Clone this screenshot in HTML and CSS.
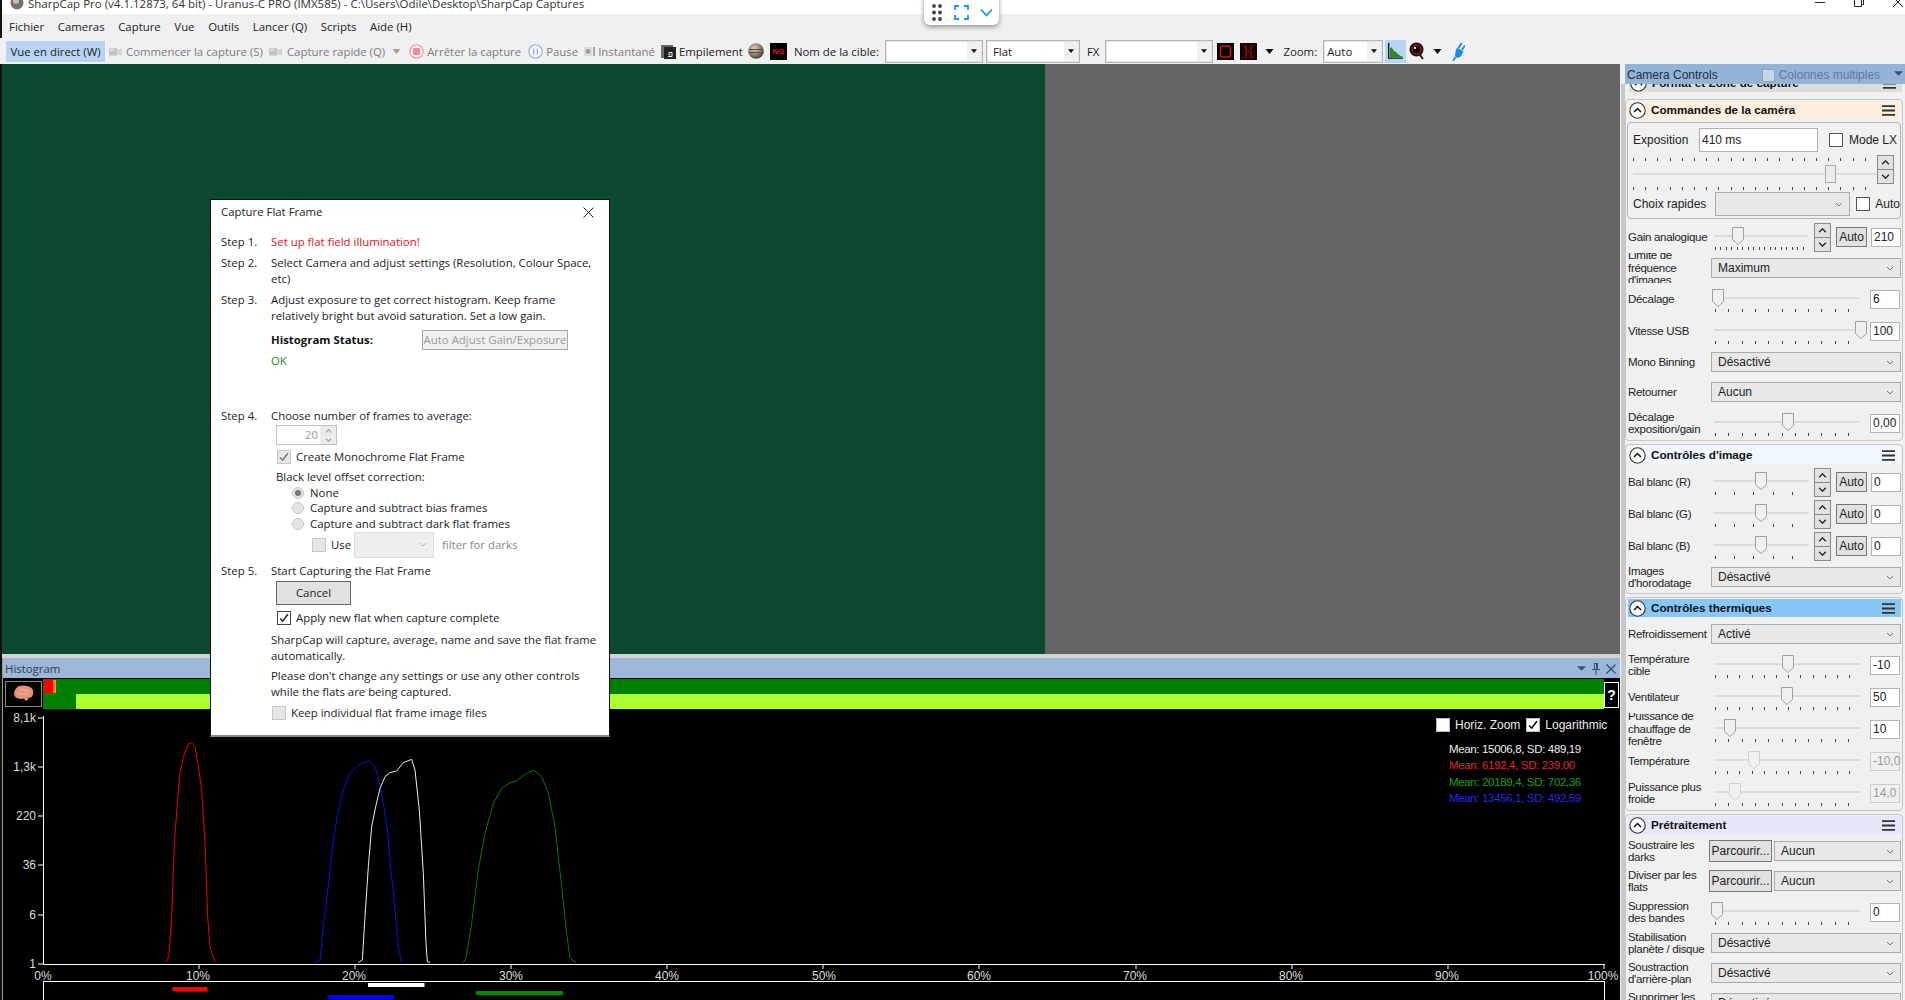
FILE: index.html
```html
<!DOCTYPE html>
<html lang="fr">
<head>
<meta charset="utf-8">
<title>SharpCap Pro</title>
<link rel="stylesheet" href="styles.css">
</head>
<body>
<svg class="defs" aria-hidden="true">
  <symbol id="chev" viewBox="0 0 8 5"><path d="M1 1l3 3 3-3" fill="none" stroke="#777"/></symbol>
  <symbol id="thumb" viewBox="0 0 12 18"><path d="M.5.5h11v12l-5.5 5-5.5-5z" fill="#f0f0f0" stroke="#a0a0a0"/></symbol>
  <symbol id="thumbd" viewBox="0 0 12 18"><path d="M.5.5h11v12l-5.5 5-5.5-5z" fill="#f0f0f0" stroke="#d0d0d0"/></symbol>
  <symbol id="up" viewBox="0 0 10 6"><path d="M1 5l4-4 4 4" fill="none" stroke="#222" stroke-width="1.6"/></symbol>
  <symbol id="down" viewBox="0 0 10 6"><path d="M1 1l4 4 4-4" fill="none" stroke="#222" stroke-width="1.6"/></symbol>
  <symbol id="collapse" viewBox="0 0 17 17"><circle cx="8.5" cy="8.5" r="7.7" fill="#fff" stroke="#333" stroke-width="1.1"/><path d="M5 10l3.5-3.5L12 10" fill="none" stroke="#111" stroke-width="1.5"/></symbol>
  <symbol id="burger" viewBox="0 0 13 11"><path d="M0 1.2h13M0 5.5h13M0 9.8h13" stroke="#333" stroke-width="1.8"/></symbol>
  <symbol id="cam" viewBox="0 0 14 11"><rect x="0" y="2" width="9" height="8" fill="#c4c4c4"/><path d="M9 4l5-2v8l-5-2z" fill="#d4d4d4"/><rect x="1" y="3" width="4" height="2" fill="#e6e6e6"/></symbol>
  <symbol id="caret" viewBox="0 0 8 5"><path d="M0 0h8L4 5z" fill="#111"/></symbol>
  <symbol id="tick" viewBox="0 0 14 14"><path d="M2.5 7.5l3 3.2 6-8" fill="none" stroke="currentColor" stroke-width="1.8"/></symbol>
  <radialGradient id="jup" cx=".4" cy=".35" r=".7"><stop offset="0" stop-color="#d8d0c4"/><stop offset=".6" stop-color="#8b7b66"/><stop offset="1" stop-color="#3b352c"/></radialGradient>
</svg>

<div class="app">
  <header class="titlebar">
    <svg class="app-ico" viewBox="0 0 14 14"><circle cx="7" cy="7" r="6.5" fill="#77706a"/><circle cx="6" cy="5" r="3" fill="#c4bdb4"/></svg>
    <span class="title-text">SharpCap Pro (v4.1.12873, 64 bit) - Uranus-C PRO (IMX585) - C:\Users\Odile\Desktop\SharpCap Captures</span>
    <span class="winbtns">
      <svg class="winb" viewBox="0 0 12 10"><path d="M1 5.5h10" stroke="#222"/></svg>
      <svg class="winb" viewBox="0 0 12 10"><path d="M1.5 2.5h7v7h-7zM3.5 2.5v-2h7v7h-2" fill="none" stroke="#222"/></svg>
      <svg class="winb" viewBox="0 0 12 10"><path d="M1 0l10 10M11 0L1 10" stroke="#222"/></svg>
    </span>
  </header>

  <nav class="menubar">
    <span>Fichier</span><span>Cameras</span><span>Capture</span><span>Vue</span><span>Outils</span><span>Lancer (Q)</span><span>Scripts</span><span>Aide (H)</span>
  </nav>

  <div class="toolbar">
    <span class="live">Vue en direct (W)</span>
    <svg class="ic ic-cam i1"><use href="#cam"/></svg><span class="dis t1">Commencer la capture (S)</span>
    <svg class="ic ic-cam i2"><use href="#cam"/></svg><span class="dis t1">Capture rapide (Q)</span>
    <svg class="ic-caret i3 faded"><use href="#caret"/></svg>
    <svg class="ic ic-round i4" viewBox="0 0 15 15"><circle cx="7.5" cy="7.5" r="6.7" fill="#fbeff0" stroke="#e79a9e" stroke-width="1.1"/><rect x="4" y="4" width="7" height="7" rx="1" fill="#ea9094"/></svg><span class="dis t2">Arrêter la capture</span>
    <svg class="ic ic-round i5" viewBox="0 0 15 15"><circle cx="7.5" cy="7.5" r="6.7" fill="#f5f7fc" stroke="#90aede" stroke-width="1.1"/><path d="M5.7 4.5v6M9.3 4.5v6" stroke="#90aede" stroke-width="1.3"/></svg><span class="dis t2">Pause</span>
    <svg class="ic ic-snap i6" viewBox="0 0 13 13"><rect x="1" y="2" width="8" height="9" fill="#dcdcdc"/><circle cx="5" cy="6.5" r="2.4" fill="#9c9c9c"/><rect x="10" y="2" width="2" height="9" fill="#a8a8a8"/></svg><span class="dis t2">Instantané</span>
    <svg class="ic ic-stack i7" viewBox="0 0 15 15"><rect x="0" y="1" width="12" height="13" fill="#666"/><rect x="3" y="3" width="12" height="12" fill="#222"/><path d="M7 12.5h4v-4H8v2.5h1.5" fill="none" stroke="#eee"/></svg><span class="blk t3">Empilement</span>
    <svg class="ic ic-jup i8" viewBox="0 0 16 16"><circle cx="8" cy="8" r="7.8" fill="url(#jup)"/><path d="M1 6.5h14M.6 9.5h14.8" stroke="#5b4c3a" stroke-width="1"/></svg>
    <span class="ng i9">NG</span>
    <label class="blk lab-cible">Nom de la cible:</label>
    <span class="tcombo w98"><span></span><i><svg class="ic-mini"><use href="#caret"/></svg></i></span>
    <span class="tcombo w94 m3"><span>Flat</span><i><svg class="ic-mini"><use href="#caret"/></svg></i></span>
    <span class="blk lab-fx">FX</span>
    <span class="tcombo w108 m6"><span></span><i><svg class="ic-mini"><use href="#caret"/></svg></i></span>
    <svg class="ic ic-red i10" viewBox="0 0 17 17"><rect width="17" height="17" fill="#000"/><rect x="3.5" y="3" width="10" height="11" rx="2" fill="none" stroke="#d40f0f" stroke-width="1.6"/></svg>
    <svg class="ic ic-red i11" viewBox="0 0 17 17"><rect width="17" height="17" fill="#100"/><path d="M2 1l13 15M15 1L2 16M6 1v15M11 1v15" stroke="#9c1010" stroke-width="1"/></svg>
    <svg class="ic-caret i12"><use href="#caret"/></svg>
    <span class="blk lab-zoom">Zoom:</span>
    <span class="tcombo w60 m6 zoomc"><span>Auto</span><i><svg class="ic-mini"><use href="#caret"/></svg></i></span>
    <span class="histbtn"><svg class="ic-hist" viewBox="0 0 15 16"><path d="M2 14V6l1-2 1 1 2 3 2 1 3 3 4 2z" fill="#2a8a22"/><path d="M.7 0v15.2H15" fill="none" stroke="#111" stroke-width="1.3"/></svg></span>
    <svg class="ic ic-lens i13" viewBox="0 0 16 18"><circle cx="7.5" cy="7.5" r="7" fill="#320507"/><circle cx="7.5" cy="7.5" r="4.5" fill="#000" stroke="#c02a30"/><circle cx="6" cy="6" r="1.2" fill="#ddd"/><path d="M11 13l3 4" stroke="#222" stroke-width="2"/></svg>
    <svg class="ic-caret i14"><use href="#caret"/></svg>
    <svg class="ic ic-plug i15" viewBox="0 0 13 19"><path d="M5 5.5l6.5 4-2.5 5-4 1.5-2-2 .5-4.500z" fill="#1e88e5"/><path d="M6.500 6L9.500 1M10 8l3-4.500M3.500 15L1 19" fill="none" stroke="#1e88e5" stroke-width="1.800"/></svg>
  </div>

  <main class="work">
    <section class="left">
      <div class="view"><div class="cam-image"></div><div class="cam-empty"></div></div>
      <div class="splitter"></div>
      <div class="hist-title">
        <span class="hist-name">Histogram</span>
        <span class="hist-tools">
          <svg class="ic-tool1" viewBox="0 0 10 5"><path d="M0 0h10L5 5z" fill="#39506f"/></svg>
          <svg class="ic-tool2" viewBox="0 0 8 12"><path d="M2 0v6H0v1h3.5v5h1V7H8V6H6V0zM3 1h1v5H3z" fill="#39506f"/></svg>
          <svg class="ic-tool3" viewBox="0 0 10 10"><path d="M.5.5l9 9M9.5.5l-9 9" stroke="#39506f" stroke-width="1.3"/></svg>
        </span>
      </div>
      <div class="hist-bars">
        <div class="brain">
          <svg viewBox="0 0 34 24" class="brain-svg"><path d="M7 4c3-3 10-4 15-2 5 1 8 5 7 9 0 4-3 6-6 6-1 3-3 4-4 4-1-1-1-2-2-3-5 1-10 0-12-3-2-3-1-8 2-11z" fill="#e6917a"/><path d="M11 6c2 2 5 0 7 1s5 0 6 3M8 11c3 0 5 2 8 1s5 1 7 0" fill="none" stroke="#f4c0ac" stroke-width="1.2"/></svg>
        </div>
        <div class="bars">
          <div class="bar-top"><span class="seg-red"></span><span class="seg-orange"></span></div>
          <div class="bar-bot"><span class="seg-green"></span></div>
        </div>
        <div class="help">?</div>
      </div>
      <div class="plot">
        <svg class="plot-svg" viewBox="0 709 1620 291">
          <g class="axis">
            <path d="M43.5 716v248.5H1605M38 718h5M38 767h5M38 816h5M38 865h5M38 915h5M38 964h5"/>
            <path d="M43.5 981.5H1604.5M43.5 981v19M1604.5 981v19"/>
            <path d="M199 965v4M355 965v4M511 965v4M667 965v4M823 965v4M979 965v4M1136 965v4M1292 965v4M1448 965v4M1604 965v4"/>
          </g>
          <g class="ylab">
            <text x="36" y="722">8,1k</text><text x="36" y="771">1,3k</text><text x="36" y="820">220</text><text x="36" y="869">36</text><text x="36" y="919">6</text><text x="36" y="968">1</text>
          </g>
          <g class="xlab">
            <text x="43" y="980">0%</text><text x="198" y="980">10%</text><text x="354" y="980">20%</text><text x="511" y="980">30%</text><text x="667" y="980">40%</text><text x="824" y="980">50%</text><text x="979" y="980">60%</text><text x="1135" y="980">70%</text><text x="1291" y="980">80%</text><text x="1447" y="980">90%</text><text x="1603" y="980">100%</text>
          </g>
          <g transform="translate(130 730) scale(.33333)" class="curves">
            <polyline class="c-g" points="1000,698 1008,685 1025,580 1045,420 1065,310 1090,220 1115,175 1140,158 1160,152 1190,130 1212,121 1235,140 1255,190 1275,290 1295,470 1310,610 1320,685 1338,697"/>
            <polyline class="c-b" points="555,698 570,690 580,590 597,450 610,330 625,240 640,180 660,130 680,110 700,98 718,93 732,105 745,140 760,220 772,300 782,410 795,540 805,650 815,698"/>
            <polyline class="c-w" points="685,698 697,690 705,560 715,410 725,290 737,230 750,175 765,140 780,128 800,123 820,98 845,88 855,120 868,240 880,430 888,640 892,695 900,697"/>
            <polyline class="c-r" points="107,697 117,680 125,560 133,340 142,220 150,130 160,80 175,42 185,38 195,50 205,110 215,180 225,340 233,560 240,650 255,697"/>
          </g>
          <rect x="172.5" y="987" width="35" height="4" fill="#f00"/>
          <rect x="368" y="983" width="56.5" height="4" fill="#fff"/>
          <rect x="328" y="995" width="66" height="4" fill="#00f"/>
          <rect x="476" y="991" width="87" height="4" fill="#080"/>
        </svg>
        <div class="plot-opts">
          <span class="chk white"></span><span class="opt-lab">Horiz. Zoom</span>
          <span class="chk white on"><svg class="tick"><use href="#tick"/></svg></span><span class="opt-lab">Logarithmic</span>
        </div>
        <div class="stats">
          <div class="s-w">Mean: 15006,8, SD: 489,19</div>
          <div class="s-r">Mean: 6192,4, SD: 239,00</div>
          <div class="s-g">Mean: 20189,4, SD: 702,36</div>
          <div class="s-b">Mean: 13456,1, SD: 492,59</div>
        </div>
      </div>
    </section>

    <aside class="side">
      <div class="side-head">
        <span>Camera Controls</span>
        <span class="multi"><span class="chk-blue"></span>Colonnes multiples</span>
        <svg class="side-caret" viewBox="0 0 10 5"><path d="M0 0h10L5 5z" fill="#39506f"/></svg>
      </div>
      <div class="side-scroll">
        <div class="clipsec">
          <div class="sec-h grey"><svg class="col"><use href="#collapse"/></svg><b>Format et Zone de capture</b><svg class="bur"><use href="#burger"/></svg></div>
        </div>

        <section class="sec first">
          <div class="sec-h peach"><svg class="col"><use href="#collapse"/></svg><b>Commandes de la caméra</b><svg class="bur"><use href="#burger"/></svg></div>
          <div class="box">
            <div class="expo-row">
              <span class="expo-lab">Exposition</span><span class="expo-in">410 ms</span>
              <span class="chk lx"></span><span>Mode LX</span>
            </div>
            <div class="expo-slide">
              <div class="expo-track">
                <div class="ticks tk12"></div>
                <div class="expo-line"><span class="expo-thumb"></span></div>
                <div class="ticks tk12"></div>
              </div>
              <div class="spin expo-spin"><span><svg><use href="#up"/></svg></span><span><svg><use href="#down"/></svg></span></div>
            </div>
            <div class="choix-row">
              <span class="choix-lab">Choix rapides</span>
              <span class="combo choix"><span></span><svg class="chev"><use href="#chev"/></svg></span>
              <span class="chk lx2"></span><span>Auto</span>
            </div>
          </div>
          <div class="row r32"><span class="lbl">Gain analogique</span><div class="sl short"><svg class="th" style="left:21px"><use href="#thumb"/></svg><i class="tk tk55"></i></div><div class="spin"><span><svg><use href="#up"/></svg></span><span><svg><use href="#down"/></svg></span></div><button class="auto">Auto</button><span class="val">210</span></div>
          <div class="row r30"><span class="lbl">Limite de fréquence d'images</span><span class="combo"><span>Maximum</span><svg class="chev"><use href="#chev"/></svg></span></div>
          <div class="row r32"><span class="lbl">Décalage</span><div class="sl"><svg class="th" style="left:1px"><use href="#thumb"/></svg><i class="tk tk135"></i></div><span class="val">6</span></div>
          <div class="row r32"><span class="lbl">Vitesse USB</span><div class="sl"><svg class="th" style="left:144px"><use href="#thumb"/></svg><i class="tk tk135"></i></div><span class="val">100</span></div>
          <div class="row r30"><span class="lbl">Mono Binning</span><span class="combo"><span>Désactivé</span><svg class="chev"><use href="#chev"/></svg></span></div>
          <div class="row r30"><span class="lbl">Retourner</span><span class="combo"><span>Aucun</span><svg class="chev"><use href="#chev"/></svg></span></div>
          <div class="row r32"><span class="lbl">Décalage exposition/gain</span><div class="sl"><svg class="th" style="left:71px"><use href="#thumb"/></svg><i class="tk tk135"></i></div><span class="val">0,00</span></div>
        </section>

        <section class="sec">
          <div class="sec-h alice"><svg class="col"><use href="#collapse"/></svg><b>Contrôles d'image</b><svg class="bur"><use href="#burger"/></svg></div>
          <div class="row r32"><span class="lbl">Bal blanc (R)</span><div class="sl short"><svg class="th" style="left:44px"><use href="#thumb"/></svg><i class="tk tk19"></i></div><div class="spin"><span><svg><use href="#up"/></svg></span><span><svg><use href="#down"/></svg></span></div><button class="auto">Auto</button><span class="val">0</span></div>
          <div class="row r32"><span class="lbl">Bal blanc (G)</span><div class="sl short"><svg class="th" style="left:44px"><use href="#thumb"/></svg><i class="tk tk19"></i></div><div class="spin"><span><svg><use href="#up"/></svg></span><span><svg><use href="#down"/></svg></span></div><button class="auto">Auto</button><span class="val">0</span></div>
          <div class="row r32"><span class="lbl">Bal blanc (B)</span><div class="sl short"><svg class="th" style="left:44px"><use href="#thumb"/></svg><i class="tk tk19"></i></div><div class="spin"><span><svg><use href="#up"/></svg></span><span><svg><use href="#down"/></svg></span></div><button class="auto">Auto</button><span class="val">0</span></div>
          <div class="row r30"><span class="lbl">Images d'horodatage</span><span class="combo"><span>Désactivé</span><svg class="chev"><use href="#chev"/></svg></span></div>
        </section>

        <section class="sec">
          <div class="sec-h sky"><svg class="col"><use href="#collapse"/></svg><b>Contrôles thermiques</b><svg class="bur"><use href="#burger"/></svg></div>
          <div class="row r30"><span class="lbl">Refroidissement</span><span class="combo"><span>Activé</span><svg class="chev"><use href="#chev"/></svg></span></div>
          <div class="row r32"><span class="lbl">Température cible</span><div class="sl"><svg class="th" style="left:71px"><use href="#thumb"/></svg><i class="tk tk12"></i></div><span class="val">-10</span></div>
          <div class="row r32"><span class="lbl">Ventilateur</span><div class="sl"><svg class="th" style="left:70px"><use href="#thumb"/></svg><i class="tk tk12"></i></div><span class="val">50</span></div>
          <div class="row r32"><span class="lbl">Puissance de chauffage de fenêtre</span><div class="sl"><svg class="th" style="left:13px"><use href="#thumb"/></svg><i class="tk tk135"></i></div><span class="val">10</span></div>
          <div class="row r32"><span class="lbl">Température</span><div class="sl"><svg class="th" style="left:37px"><use href="#thumbd"/></svg><i class="tk tk12"></i></div><span class="val dim">-10,0</span></div>
          <div class="row r32"><span class="lbl">Puissance plus froide</span><div class="sl"><svg class="th" style="left:18px"><use href="#thumbd"/></svg><i class="tk tk135"></i></div><span class="val dim">14,0</span></div>
        </section>

        <section class="sec">
          <div class="sec-h lav"><svg class="col"><use href="#collapse"/></svg><b>Prétraitement</b><svg class="bur"><use href="#burger"/></svg></div>
          <div class="row r30"><span class="lbl nar">Soustraire les darks</span><button class="browse">Parcourir...</button><span class="combo cn"><span>Aucun</span><svg class="chev"><use href="#chev"/></svg></span></div>
          <div class="row r30"><span class="lbl nar">Diviser par les flats</span><button class="browse">Parcourir...</button><span class="combo cn"><span>Aucun</span><svg class="chev"><use href="#chev"/></svg></span></div>
          <div class="row r32"><span class="lbl"><span>Suppression<br>des bandes</span></span><div class="sl"><svg class="th" style="left:0"><use href="#thumb"/></svg><i class="tk tk135"></i></div><span class="val">0</span></div>
          <div class="row r30"><span class="lbl">Stabilisation planète / disque</span><span class="combo"><span>Désactivé</span><svg class="chev"><use href="#chev"/></svg></span></div>
          <div class="row r30"><span class="lbl">Soustraction d'arrière-plan</span><span class="combo"><span>Désactivé</span><svg class="chev"><use href="#chev"/></svg></span></div>
          <div class="row r30"><span class="lbl">Supprimer les pixels chauds</span><span class="combo"><span>Désactivé</span><svg class="chev"><use href="#chev"/></svg></span></div>
        </section>
      </div>
    </aside>
  </main>

  <div class="floatbar">
    <svg class="fb-dots" viewBox="0 0 10 17"><g fill="#444"><circle cx="2" cy="2" r="1.9"/><circle cx="8" cy="2" r="1.9"/><circle cx="2" cy="8.5" r="1.9"/><circle cx="8" cy="8.5" r="1.9"/><circle cx="2" cy="15" r="1.9"/><circle cx="8" cy="15" r="1.9"/></g></svg>
    <svg class="fb-full" viewBox="0 0 15 15"><path d="M1 5V1h4M10 1h4v4M14 10v4h-4M5 14H1v-4" fill="none" stroke="#1e90ff" stroke-width="1.8"/></svg>
    <svg class="fb-chev" viewBox="0 0 13 9"><path d="M1 1.5l5.5 6 5.5-6" fill="none" stroke="#1e90ff" stroke-width="1.8"/></svg>
  </div>

  <div class="dialog">
    <div class="dlg-title"><span>Capture Flat Frame</span><svg class="dlg-x" viewBox="0 0 11 11"><path d="M.5.5l10 10M10.5.5l-10 10" stroke="#222"/></svg></div>
    <div class="step s1"><span class="sn">Step 1.</span><span class="red">Set up flat field illumination!</span></div>
    <div class="step s2"><span class="sn">Step 2.</span><span>Select Camera and adjust settings (Resolution, Colour Space, etc)</span></div>
    <div class="step s2"><span class="sn">Step 3.</span><span>Adjust exposure to get correct histogram. Keep frame relatively bright but avoid saturation. Set a low gain.</span></div>
    <div class="status"><b>Histogram Status:</b><span class="adj">Auto Adjust Gain/Exposure</span></div>
    <div class="ok">OK</div>
    <div class="step s4"><span class="sn">Step 4.</span><span>Choose number of frames to average:</span></div>
    <div class="num"><span class="num-v">20</span><span class="num-s"><svg><use href="#up"/></svg><svg><use href="#down"/></svg></span></div>
    <div class="chkrow mono"><span class="dchk dis-c"><svg class="tick"><use href="#tick"/></svg></span>Create Monochrome Flat Frame</div>
    <div class="blk-lvl">Black level offset correction:</div>
    <div class="radio"><span class="rd on"></span>None</div>
    <div class="radio"><span class="rd"></span>Capture and subtract bias frames</div>
    <div class="radio"><span class="rd"></span>Capture and subtract dark flat frames</div>
    <div class="userow"><span class="dchk dis-c"></span><span class="use-l">Use</span><span class="dcombo"><svg class="chev"><use href="#chev"/></svg></span><span class="grey-t">filter for darks</span></div>
    <div class="step s5"><span class="sn">Step 5.</span><span>Start Capturing the Flat Frame</span></div>
    <button class="cancel">Cancel</button>
    <div class="chkrow apply"><span class="dchk"><svg class="tick"><use href="#tick"/></svg></span>Apply new flat when capture complete</div>
    <p class="para p1">SharpCap will capture, average, name and save the flat frame automatically.</p>
    <p class="para p2">Please don't change any settings or use any other controls while the flats are being captured.</p>
    <div class="chkrow keep"><span class="dchk dis-c"></span>Keep individual flat frame image files</div>
  </div>
</div>
</body>
</html>
```

FILE: styles.css
```css
* { box-sizing: border-box; }
html, body { margin: 0; height: 100%; overflow: hidden; background: #000; }
body { font-family: "Open Sans", "Noto Sans", sans-serif; font-size: 11.4px; color: #222; }
.defs { position: absolute; width: 0; height: 0; }
.app { position: relative; width: 1905px; height: 1000px; display: flex; flex-direction: column; overflow: hidden; }

/* title bar */
.titlebar { height: 14px; background: #fff; display: flex; overflow: hidden; align-items: flex-start; padding-left: 10px; border-left: 2px solid #111; }
.app-ico { width: 14px; height: 14px; margin-top: -4px; margin-left: -2px; flex: none; }
.title-text { margin: -4px 0 0 4px; line-height: 16px; color: #333; font-size: 11.5px; }
.winbtns { margin-left: auto; display: flex; gap: 27px; padding-right: 1px; }
.winb { width: 12px; height: 10px; margin-top: -3px; }

/* menu */
.menubar { height: 24px; background: #f0eff1; display: flex; align-items: center; gap: 13.6px; color: #222; border-left: 2px solid #111; padding-left: 7px; }

/* tool bar */
.toolbar { height: 26px; background: #f0eff1; display: flex; align-items: center; padding-left: 6px; white-space: nowrap; }
.live { width: 99px; height: 21px; margin-top: 1px; background: #b7d4f2; display: flex; align-items: center; justify-content: center; color: #222; }
.dis { color: #7c7c7c; }
.blk { color: #222; }
.ic { display: block; flex: none; }
.ic-cam { width: 13px; height: 11px; }
.i1 { margin-left: 4px; margin-right: 4px; }
.i2 { margin-left: 6px; margin-right: 5px; }
.ic-caret { width: 9px; height: 5px; flex: none; }
.i3 { margin-left: 7px; }
.faded { opacity: .35; }
.ic-round { width: 15px; height: 15px; }
.i4 { margin-left: 8px; margin-right: 3px; }
.i5 { margin-left: 7px; margin-right: 3px; }
.ic-snap { width: 13px; height: 13px; }
.i6 { margin-left: 5px; margin-right: 2px; }
.ic-stack { width: 15px; height: 15px; }
.i7 { margin-left: 6px; margin-right: 3px; }
.ic-jup { width: 16px; height: 16px; }
.i8 { margin-left: 5px; }
.ng { width: 17px; height: 17px; margin-left: 6px; background: #000; color: #e01010; font: bold 8px/17px "Liberation Sans", sans-serif; text-align: center; overflow: hidden; flex: none; }
.lab-cible { margin-left: 7px; margin-right: 6px; }
.tcombo { height: 23px; background: #fff; border: 1px solid #b4b4b4; display: flex; justify-content: space-between; align-items: stretch; padding-left: 6px; flex: none; box-shadow: inset 0 0 0 .5px #ccc; }
.tcombo > span { align-self: center; }
.tcombo i { width: 14px; background: #f0eff1; margin: 1px; display: flex; align-items: center; justify-content: center; }
.ic-mini { width: 6px; height: 4px; }
.w98 { width: 98px; } .w94 { width: 94px; } .w108 { width: 108px; } .w60 { width: 60px; }
.m3 { margin-left: 3px; } .m6 { margin-left: 6px; }
.zoomc { padding-left: 3px; }
.lab-fx { margin-left: 7px; }
.ic-red { width: 17px; height: 17px; }
.i10 { margin-left: 4px; }
.i11 { margin-left: 6px; }
.i12 { margin-left: 8px; }
.lab-zoom { margin-left: 9px; }
.histbtn { width: 21px; height: 23px; margin-left: 2px; background: #b7d4f2; display: flex; align-items: center; justify-content: center; flex: none; }
.ic-hist { width: 15px; height: 16px; }
.ic-lens { width: 16px; height: 18px; }
.i13 { margin-left: 3px; }
.i14 { margin-left: 8px; }
.ic-plug { width: 13px; height: 19px; }
.i15 { margin-left: 10px; }

/* work area */
.work { height: 936px; display: flex; }
.left { width: 1620px; flex: none; display: flex; flex-direction: column; border-left: 2px solid #111; }
.view { height: 590px; display: flex; }
.cam-image { width: 1043px; background: #0b4a2f; }
.cam-empty { flex: 1; background: #666467; }
.splitter { height: 4px; background: #d2d2d2; }
.hist-title { height: 20px; background: #9cb7d8; display: flex; align-items: center; justify-content: space-between; padding: 1px 4px 0 2px; border-left: 1px solid #999; }
.hist-name { color: #2f3d4f; font-size: 11.4px; }
.hist-tools { display: flex; align-items: center; gap: 6px; }
.ic-tool1 { width: 9px; height: 5px; }
.ic-tool2 { width: 8px; height: 12px; }
.ic-tool3 { width: 10px; height: 10px; }
.hist-bars { height: 31px; background: #000; display: flex; border-left: 1px solid #999; align-items: flex-start; }
.brain { width: 37px; height: 26px; margin: 3px 0 0 2px; border: 1px solid #888; display: flex; align-items: center; justify-content: center; flex: none; }
.brain-svg { width: 26px; height: 20px; }
.bars { width: 1561px; margin: 1px 0 0 1px; height: 30px; flex: none; }
.bar-top { height: 15px; background: #008000; display: flex; padding: 1px 0 1px 1px; }
.seg-red { width: 9px; background: #f00; }
.seg-orange { width: 3px; background: #ff8c1a; }
.bar-bot { height: 15px; background: #adff2f; }
.seg-green { display: block; width: 33px; height: 100%; background: #008000; }
.help { width: 15px; height: 26px; margin-top: 4px; border: 1px solid #fff; background: #000; color: #fff; font: bold 14px/24px "Liberation Sans", sans-serif; text-align: center; flex: none; }

.plot { flex: 1; position: relative; background: #000; border-left: 1px solid #999; overflow: hidden; }
.plot-svg { position: absolute; left: -3px; top: 0; width: 1620px; height: 291px; }
.axis path { fill: none; stroke: #fff; stroke-width: 1; }
.ylab text { fill: #ddd; font: 12px "Liberation Sans", sans-serif; text-anchor: end; }
.xlab text { fill: #ddd; font: 12px "Liberation Sans", sans-serif; text-anchor: middle; }
.curves polyline { fill: none; stroke-width: 1; stroke-linejoin: round; vector-effect: non-scaling-stroke; }
.c-r { stroke: #e80000; } .c-b { stroke: #1010e0; } .c-g { stroke: #0a780a; } .c-w { stroke: #eee; }

.plot-opts { position: absolute; left: 1433px; top: 9px; display: flex; align-items: center; color: #eee; font: 12px "Liberation Sans", sans-serif; }
.opt-lab { margin: 0 6px 0 5px; }
.stats { position: absolute; left: 1446px; top: 32px; font: 11.5px/16.3px "Liberation Sans", sans-serif; letter-spacing: -.35px; }
.s-w { color: #eee; } .s-r { color: #e02828; } .s-g { color: #18a018; } .s-b { color: #2b2be0; }

.chk { width: 14px; height: 14px; border: 1px solid #555; background: #fff; display: inline-block; flex: none; }
.chk.white { border-color: #bbb; }
.chk.on { color: #000; }
.tick { display: block; width: 100%; height: 100%; }

/* right panel */
.side { width: 285px; flex: none; background: #f0f0f0; font: 12px/12.4px "Liberation Sans", sans-serif; color: #222; border-left: 1px solid #eee; display: flex; flex-direction: column; }
.side-head { height: 20px; margin-left: 4px; background: #95b3d7; display: flex; align-items: center; padding: 2px 0 0 2px; color: #1f2f42; flex: none; position: relative; }
.multi { display: flex; align-items: center; gap: 4px; margin-left: 44px; color: #5d7a9e; }
.chk-blue { width: 13px; height: 13px; background: #c8d6e9; border: 1px solid #8ea6c6; }
.side-caret { position: absolute; right: 2px; top: 7px; width: 9px; height: 5px; }
.side-scroll { flex: 1; overflow: hidden; border-left: 4px solid #c8c8c8; padding-right: 2px; }
.clipsec { height: 8px; overflow: hidden; margin-bottom: 7px; padding: 0 1px 0 3px; }
.clipsec .sec-h { margin-top: -10px; }
.sec { border: 1px solid #c6c6c6; border-radius: 4px; margin-bottom: 3px; padding: 1px; }
.sec-h { height: 18px; margin: 0 0 2px 1px; display: flex; align-items: center; font-size: 11.7px; padding-left: 1px; padding-right: 6px; }
.sec-h b { margin-left: 5px; flex: 1; color: #111; }
.col { width: 17px; height: 17px; flex: none; }
.bur { width: 13px; height: 11px; flex: none; }
.grey { background: #dcdcdc; }
.peach { background: #fdeedd; }
.alice { background: #f0f7fe; }
.sky { background: #87c7f8; }
.lav { background: #e6e6fa; }

.first .sec-h { margin-bottom: 3px; }
.box { margin: 0 0 2px; border: 1px solid #b4b4b4; border-radius: 4px; height: 97px; padding: 5px 0 0 5px; display: flex; flex-direction: column; }
.expo-row { display: flex; align-items: center; height: 24px; }
.expo-lab { width: 66px; }
.expo-in { width: 119px; height: 24px; background: #fff; border: 1px solid #b0b0b0; padding-left: 2px; line-height: 22px; }
.chk.lx { margin: 0 6px 0 11px; }
.expo-slide { display: flex; height: 36px; margin-top: 3px; }
.expo-track { width: 244px; display: flex; flex-direction: column; padding-top: 3px; }
.expo-line { position: relative; height: 2px; background: #dcdcdc; margin: 12px 0; border: 0; }
.expo-thumb { position: absolute; left: 192px; top: -8px; width: 11px; height: 18px; background: #ececec; border: 1px solid #aaa; }
.expo-spin { margin: 2px 0 0 6px; height: 28px; width: 15px; }
.choix-row { display: flex; align-items: center; height: 24px; margin-top: 1px; }
.choix-lab { width: 84px; }
.combo { height: 20px; width: 190px; background: #e8e8e8; border: 1px solid #ababab; display: flex; align-items: center; justify-content: space-between; padding: 0 6px; flex: none; }
.combo.choix { width: 135px; height: 24px; }
.chk.lx2 { margin: 0 5px 0 6px; }
.chev { width: 8px; height: 5px; flex: none; }

.row { display: flex; align-items: center; padding-left: 1px; }
.r30 { height: 30px; }
.r32 { height: 32px; }
.lbl { width: 83px; height: 100%; flex: none; display: flex; align-items: center; overflow: hidden; font-size: 11.5px; letter-spacing: -.3px; }
.lbl.nar { width: 81px; }
.sl { position: relative; width: 155px; height: 32px; align-self: flex-start; flex: none; background: linear-gradient(#dcdcdc, #dcdcdc) 3px 14px / 146px 2px no-repeat; }
.sl.short { width: 103px; background-size: 94px 2px; }
.th { position: absolute; top: 6px; width: 12px; height: 18px; }
.tk { position: absolute; left: 4px; right: 6px; top: 26px; height: 3px; }
.short .tk { right: 9px; }
.tk55 { background: repeating-linear-gradient(90deg, #444 0 1px, transparent 1px 5.5px); }
.tk12 { background: repeating-linear-gradient(90deg, #444 0 1px, transparent 1px 12.2px); }
.tk135 { background: repeating-linear-gradient(90deg, #444 0 1px, transparent 1px 13.3px); }
.tk19 { background: repeating-linear-gradient(90deg, #444 0 1px, transparent 1px 19.2px); }
.ticks { height: 3px; }
.spin { width: 17px; height: 29px; flex: none; display: flex; flex-direction: column; margin: 0 5px 0 0; }
.spin span { flex: 1; background: #e1e1e1; border: 1px solid #8a8a8a; display: flex; align-items: center; justify-content: center; }
.spin span + span { border-top: 0; }
.spin svg { width: 9px; height: 5px; }
.auto { width: 31px; height: 20px; padding: 0; background: #e1e1e1; border: 1px solid #777; font: inherit; color: #222; flex: none; margin-right: 4px; }
.val { width: 30px; height: 19px; background: #fff; border: 1px solid #b4b4b4; padding-left: 2px; line-height: 17px; flex: none; }
.sl + .val { margin-left: 4px; }
.val.dim { color: #999; background: #f0f0f0; border-color: #ccc; }
.browse { width: 63px; height: 22px; padding: 0; background: #e1e1e1; border: 1px solid #777; font: inherit; color: #222; flex: none; }
.combo.cn { width: 127px; margin-left: 2px; }

/* floating toolbar */
.floatbar { position: absolute; left: 924px; top: -4px; width: 75px; height: 29px; background: #fff; border-radius: 0 0 6px 6px; box-shadow: 0 2px 5px rgba(0,0,0,.4); display: flex; align-items: center; padding: 4px 6px 0 8px; justify-content: space-between; }
.fb-dots { width: 10px; height: 17px; }
.fb-full { width: 15px; height: 15px; }
.fb-chev { width: 13px; height: 9px; }

/* dialog */
.dialog { position: absolute; left: 210px; top: 199px; width: 400px; height: 538px; background: #fff; border: 1px solid #111; border-bottom: 2px solid #8a8a8a; padding: 0 10px; color: #222; line-height: 16px; font-size: 11.4px; }
.dlg-title { height: 34px; display: flex; align-items: center; justify-content: space-between; padding: 0 5px 10px 0; }
.dlg-x { width: 11px; height: 11px; }
.step { display: flex; }
.sn { width: 50px; flex: none; }
.red { color: #d81818; }
.s2 { margin-top: 5px; }
.s4 { margin-top: 39px; }
.s5 { margin-top: 5px; }
.status { display: flex; align-items: center; height: 20px; margin: 6px 0 0 50px; }
.status b { width: 151px; color: #111; font-weight: 700; }
.adj { width: 146px; height: 20px; border: 1px solid #aaa; background: #f0f0f0; color: #9a9a9a; text-align: center; line-height: 18px; white-space: nowrap; overflow: hidden; }
.ok { margin: 3px 0 0 50px; color: #1f8a1f; }
.num { width: 61px; height: 20px; margin: 1px 0 0 55px; border: 1px solid #c0c0c0; display: flex; justify-content: flex-end; color: #999; }
.num-v { line-height: 18px; padding-right: 2px; }
.num-s { width: 16px; display: flex; flex-direction: column; background: #eaeaea; align-items: center; justify-content: space-around; }
.num-s svg { width: 7px; height: 4px; opacity: .4; }
.chkrow { display: flex; align-items: center; }
.dchk { width: 14px; height: 14px; border: 1px solid #444; background: #fff; flex: none; margin-right: 5px; color: #222; }
.dis-c { background: #e6e6e6; border-color: #c8c8c8; color: #777; }
.mono { margin: 5px 0 0 56px; height: 14px; }
.blk-lvl { margin: 5px 0 0 55px; }
.radio { display: flex; align-items: center; height: 15.5px; margin-left: 71px; }
.rd { width: 12px; height: 12px; border-radius: 50%; border: 1px solid #c8c8c8; background: #e4e4e4; margin-right: 6px; flex: none; position: relative; }
.rd.on::after { content: ""; position: absolute; left: 2px; top: 2px; width: 6px; height: 6px; border-radius: 50%; background: #777; }
.userow { display: flex; align-items: center; height: 26px; margin-left: 91px; }
.userow .dchk { margin-right: 5px; }
.use-l { width: 23px; }
.dcombo { width: 80px; height: 26px; background: #eee; border: 1px solid #ddd; display: flex; align-items: center; justify-content: flex-end; padding-right: 6px; margin-right: 8px; }
.dcombo .chev { opacity: .5; }
.grey-t { color: #888; }
.cancel { display: block; width: 75px; height: 24px; margin: 2px 0 0 55px; background: #e1e1e1; border: 1px solid #666; font: inherit; color: #222; padding: 0; }
.apply { margin: 6px 0 0 56px; height: 14px; }
.para { margin: 7px 0 0 50px; width: 330px; }
.p2 { margin-top: 4px; }
.keep { margin: 6px 0 0 51px; height: 14px; }
```
